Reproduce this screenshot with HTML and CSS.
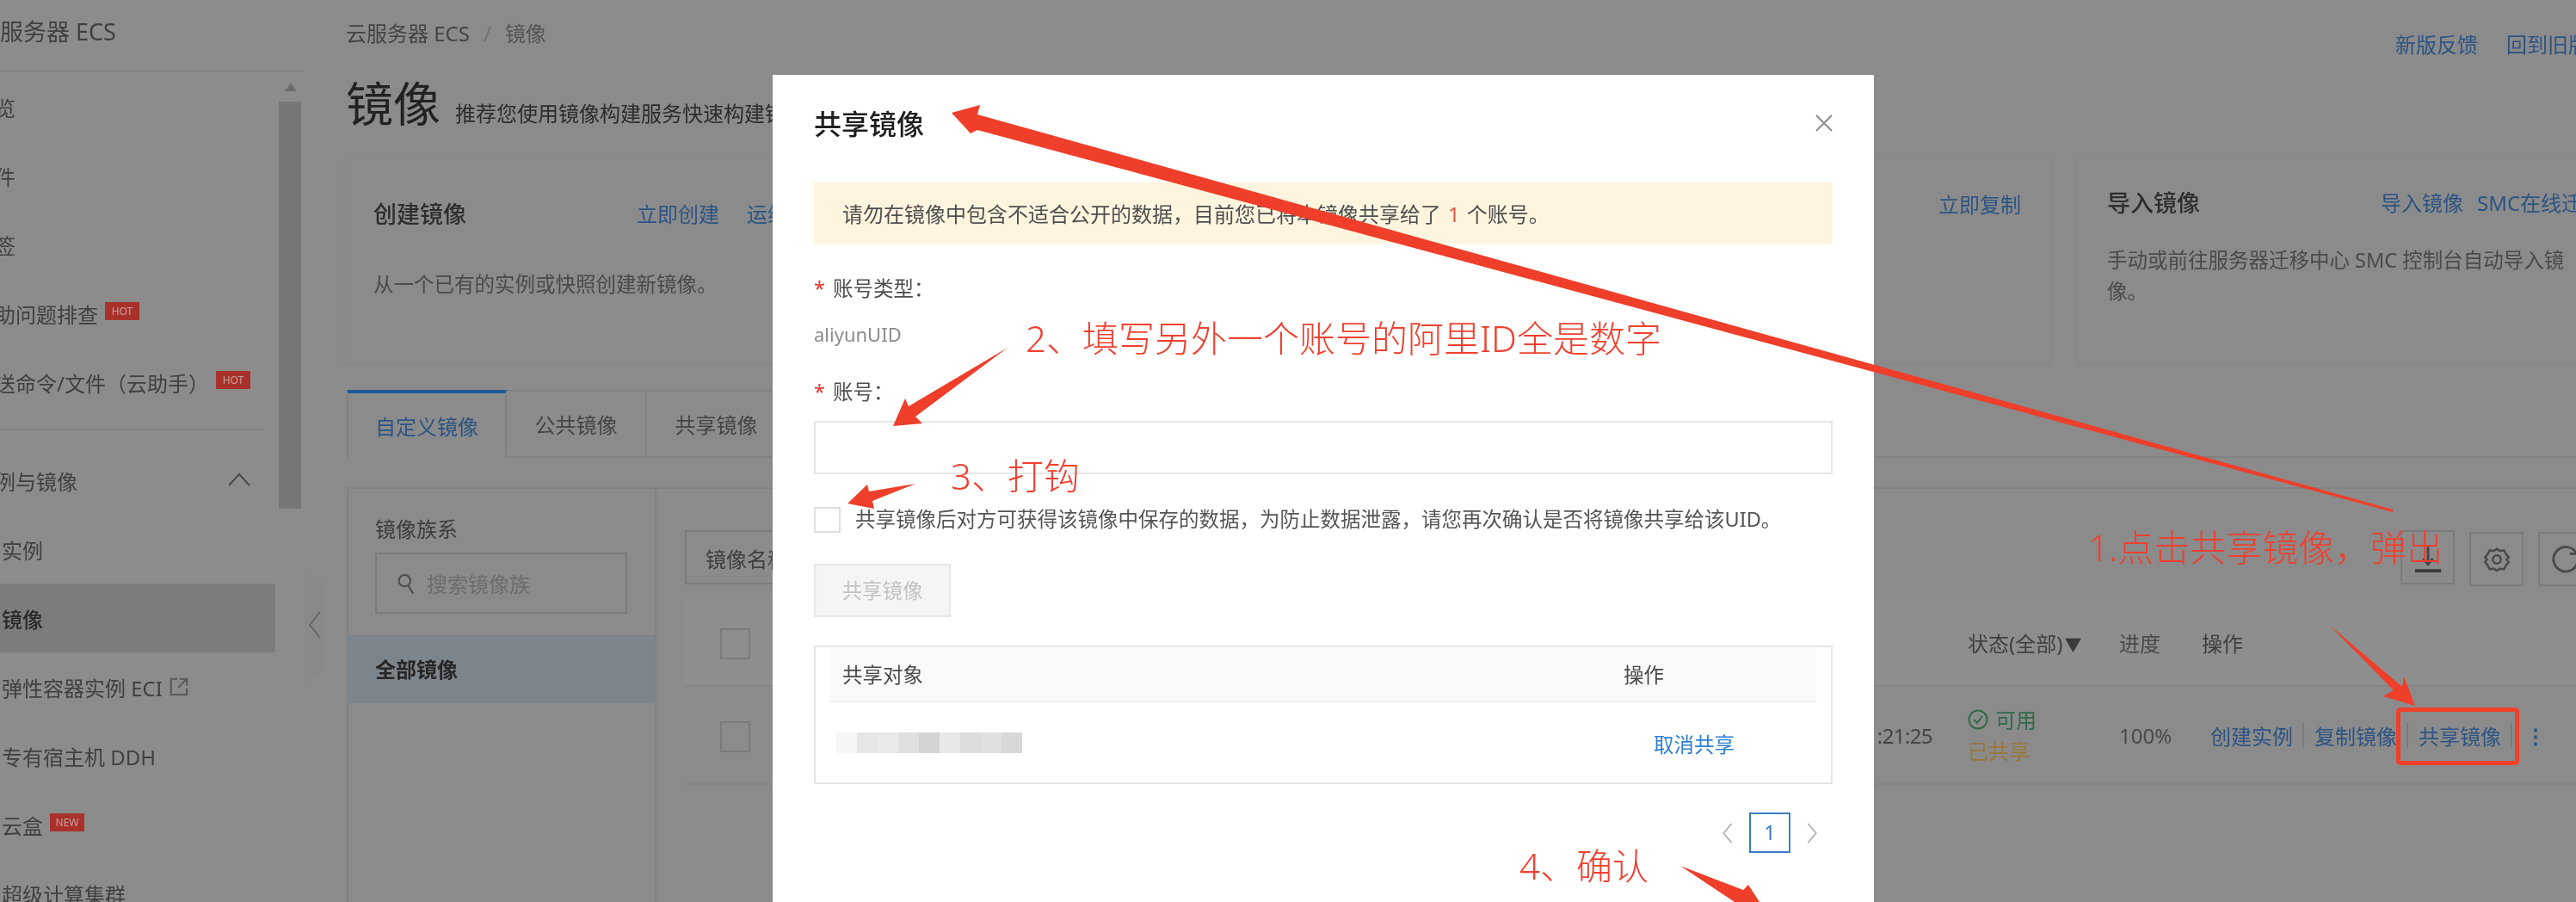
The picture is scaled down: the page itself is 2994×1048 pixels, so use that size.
FILE: index.html
```html
<!DOCTYPE html>
<html lang="zh-CN">
<head>
<meta charset="utf-8">
<title>镜像</title>
<link rel="stylesheet" href="styles.css">
</head>
<body>
<div class="page">
  <aside class="sidebar">
    <div class="side-head">云服务器 ECS</div>
    <div class="side-body">
      <nav class="side-nav">
        <div class="nav-item">概览</div>
        <div class="nav-item">事件</div>
        <div class="nav-item">标签</div>
        <div class="nav-item">自助问题排查<span class="badge">HOT</span></div>
        <div class="nav-item">发送命令/文件（云助手）<span class="badge">HOT</span></div>
        <div class="nav-divider"></div>
        <div class="nav-item nav-group">实例与镜像
          <svg class="nav-chevron" viewBox="0 0 26 16"><path d="M1 15 13 2l12 13" fill="none" stroke="#4a4a4a" stroke-width="2"/></svg>
        </div>
        <div class="nav-item nav-sub">实例</div>
        <div class="nav-item nav-sub nav-active">镜像</div>
        <div class="nav-item nav-sub">弹性容器实例 ECI
          <svg class="nav-ext" viewBox="0 0 24 24"><path d="M10 2H2v20h20v-8M13 2h9v9M22 2 11 13" fill="none" stroke="#5c5c5c" stroke-width="2.4"/></svg>
        </div>
        <div class="nav-item nav-sub">专有宿主机 DDH</div>
        <div class="nav-item nav-sub">云盒<span class="badge badge-new">NEW</span></div>
        <div class="nav-item nav-sub">超级计算集群</div>
      </nav>
      <div class="scrollbar">
        <div class="scroll-up"></div>
        <div class="scroll-thumb"></div>
      </div>
    </div>
  </aside>

  <main class="main">
    <div class="topbar">
      <div class="crumbs">云服务器 ECS<span class="crumb-sep">/</span><span class="crumb-now">镜像</span></div>
      <div class="top-links"><span>新版反馈</span><span>回到旧版</span></div>
    </div>
    <div class="title-row">
      <h1 class="page-title">镜像</h1>
      <span class="page-sub">推荐您使用镜像构建服务快速构建镜像</span>
    </div>

    <section class="cards">
      <div class="card card-create">
        <div class="card-head">
          <strong class="card-title">创建镜像</strong>
          <span class="card-links"><span>立即创建</span><span>运维编排</span></span>
        </div>
        <p class="card-desc">从一个已有的实例或快照创建新镜像。</p>
      </div>
      <div class="card card-copy">
        <div class="card-head card-head-copy">
          <strong class="card-title">复制镜像</strong>
          <span class="card-links"><span>立即复制</span></span>
        </div>
      </div>
      <div class="card card-import">
        <div class="card-head card-head-import">
          <strong class="card-title">导入镜像</strong>
          <span class="card-links"><span>导入镜像</span><span>SMC在线迁移</span></span>
        </div>
        <p class="card-desc card-desc-import">手动或前往服务器迁移中心 SMC 控制台自动导入镜像。</p>
      </div>
    </section>

    <div class="tabs">
      <div class="tab tab-on">自定义镜像</div>
      <div class="tab">公共镜像</div>
      <div class="tab">共享镜像</div>
    </div>

    <section class="panel">
      <div class="family">
        <div class="family-title">镜像族系</div>
        <div class="family-search">
          <svg class="search-ico" viewBox="0 0 24 32"><circle cx="10" cy="12" r="8" fill="none" stroke="#4c4c4c" stroke-width="2.4"/><path d="m15 19 7 11" stroke="#4c4c4c" stroke-width="2.6" fill="none"/></svg>
          <span>搜索镜像族</span>
        </div>
        <div class="family-item">全部镜像</div>
      </div>
      <div class="list">
        <div class="toolbar">
          <div class="name-select">镜像名称</div>
          <div class="tool-btns">
            <div class="tool-btn tool-first">
              <svg viewBox="0 0 40 40" class="tool-ico"><path d="M20 6v20M14 21l6 7 6-7" fill="none" stroke="#444" stroke-width="3"/><path d="M4 36h32" stroke="#3a3a3a" stroke-width="4"/></svg>
            </div>
            <div class="tool-btn">
              <svg viewBox="0 0 40 40" class="tool-ico"><path d="M20 4l5 3 6-1 3 6 4 5-3 3 3 4-4 5-3 6-6-1-5 3-5-3-6 1-3-6-4-5 3-4-3-3 4-5 3-6 6 1z" transform="translate(4 4) scale(.8)" fill="none" stroke="#4a4a4a" stroke-width="3.4"/><circle cx="20" cy="20" r="5" fill="none" stroke="#4a4a4a" stroke-width="2.6"/></svg>
            </div>
            <div class="tool-btn">
              <svg viewBox="0 0 40 40" class="tool-ico"><path d="M33 12A15 15 0 1 0 35 22" fill="none" stroke="#4a4a4a" stroke-width="3"/><path d="M34 4v9h-9" fill="none" stroke="#4a4a4a" stroke-width="3"/></svg>
            </div>
          </div>
        </div>
        <div class="t-row t-head">
          <span class="t-check"></span>
          <span class="t-fill"></span>
          <span class="t-status">状态(全部)<i class="caret">▼</i></span>
          <span class="t-progress">进度</span>
          <span class="t-ops">操作</span>
        </div>
        <div class="t-row t-body">
          <span class="t-check"></span>
          <span class="t-fill t-time">2021-03-01 11:21:25</span>
          <span class="t-status">
            <span class="st-ok">
              <svg class="st-ico" viewBox="0 0 24 24"><circle cx="12" cy="12" r="10.5" fill="none" stroke="#2e6b46" stroke-width="2"/><path d="m7 12 4 4 6-8" fill="none" stroke="#2e6b46" stroke-width="2"/></svg>可用</span>
            <span class="st-shared">已共享</span>
          </span>
          <span class="t-progress">100%</span>
          <span class="t-ops t-links">
            <span>创建实例</span><i></i><span>复制镜像</span><i></i><span>共享镜像</span><i></i><b class="more">⋮</b>
          </span>
        </div>
      </div>
    </section>
  </main>

  <div class="collapse-tab">
    <svg viewBox="0 0 16 32" class="collapse-ico"><path d="M14 1 2 16l12 15" fill="none" stroke="#666" stroke-width="2"/></svg>
  </div>

  <section class="modal">
    <div class="modal-head">
      <h2>共享镜像</h2>
      <svg class="modal-x" viewBox="0 0 20 20"><path d="M1 1l18 18M19 1 1 19" stroke="#8a8a8a" stroke-width="2" fill="none"/></svg>
    </div>
    <div class="notice">请勿在镜像中包含不适合公开的数据，目前您已将本镜像共享给了<em>1</em>个账号。</div>
    <div class="field-label label-type"><span class="req">*</span>账号类型：</div>
    <div class="field-value">aliyunUID</div>
    <div class="field-label label-acct"><span class="req">*</span>账号：</div>
    <div class="acct-input"></div>
    <div class="confirm">
      <span class="box"></span>
      <span>共享镜像后对方可获得该镜像中保存的数据，为防止数据泄露，请您再次确认是否将镜像共享给该UID。</span>
    </div>
    <div class="share-btn">共享镜像</div>
    <div class="share-table">
      <div class="share-head"><span>共享对象</span><span class="col-op">操作</span></div>
      <div class="share-row">
        <div class="mosaic"><i></i><i></i><i></i><i></i><i></i><i></i><i></i><i></i><i></i></div>
        <span class="col-op cancel">取消共享</span>
      </div>
    </div>
    <div class="pager">
      <svg class="pg-arrow" viewBox="0 0 14 28"><path d="M12 2 2 14l10 12" fill="none" stroke="#b5b5b5" stroke-width="2"/></svg>
      <span class="pg-num">1</span>
      <svg class="pg-arrow" viewBox="0 0 14 28"><path d="m2 2 10 12L2 26" fill="none" stroke="#b5b5b5" stroke-width="2"/></svg>
    </div>
  </section>

  <svg class="arrows" viewBox="0 0 2994 1048">
    <polygon points="1106,131 1139,122 1136,133 2781,592 2781,595 1136,151 1128,155"/>
    <polygon points="1038,495 1052,463 1056,472 1171,404 1064,484 1072,492"/>
    <polygon points="985,585 1008,563 1010,571 1064,562 1014,582 1016,591"/>
    <polygon points="2807,820 2770,809 2782,802 2706,725 2792,798 2794,786"/>
    <polygon points="1953,1006 2026,1034 2032,1028 2045,1048 2016,1048"/>
  </svg>
  <div class="redbox"></div>
  <div class="note note-1">1.点击共享镜像，弹出</div>
  <div class="note note-2">2、填写另外一个账号的阿里ID全是数字</div>
  <div class="note note-3">3、打钩</div>
  <div class="note note-4">4、确认</div>
  <div class="watermark">https://blog.csdn.net/weixin_41057 1078</div>
</div>
</body>
</html>
```
FILE: styles.css
```css
* { box-sizing: border-box; }
html, body { margin: 0; padding: 0; }
body {
  width: 2994px;
  height: 1048px;
  overflow: hidden;
  background: #8b8b8b;
  font-family: "Noto Sans", "Noto Sans CJK SC", sans-serif;
  font-size: 24px;
  color: #3e3e3e;
}
.page {
  position: relative;
  display: flex;
  width: 2994px;
  height: 1048px;
  overflow: hidden;
  background: #8b8b8b;
  filter: blur(0.7px);
}

/* sidebar */
.sidebar { width: 354px; flex: none; background: #8c8c8c; display: flex; flex-direction: column; overflow: hidden; }
.side-head {
  width: 381px;
  height: 84px;
  flex: none;
  margin-left: -27px;
  padding-bottom: 12px;
  display: flex;
  align-items: center;
  font-size: 27px;
  color: #404040;
  border-bottom: 2px solid #838383;
  white-space: nowrap;
}
.side-body { flex: 1; display: flex; min-height: 0; }
.side-nav { width: 320px; flex: none; overflow: hidden; }
.nav-item {
  height: 80px;
  margin-left: -30px;
  display: flex;
  align-items: center;
  white-space: nowrap;
  color: #404040;
}
.nav-divider { height: 2px; background: #828282; margin: 14px 14px 18px 0; }
.nav-group { position: relative; }
.nav-chevron { position: absolute; left: 295px; top: 31px; width: 26px; height: 16px; }
.nav-sub { margin-left: 2px; }
.nav-active { margin-left: 0; padding-left: 2px; background: #7c7c7c; color: #2a2a2a; font-weight: 500; }
.nav-ext { width: 22px; height: 24px; margin-left: 8px; }
.badge {
  display: inline-block;
  margin-left: 8px;
  margin-top: -6px;
  width: 40px;
  height: 21px;
  line-height: 21px;
  background: #a8322b;
  color: #c9a09c;
  font-size: 12px;
  text-align: center;
}
.scrollbar { width: 26px; margin-left: 4px; flex: none; position: relative; }
.scroll-up {
  position: absolute;
  left: 7px;
  top: 12px;
  border-left: 7px solid transparent;
  border-right: 7px solid transparent;
  border-bottom: 10px solid #6c6c6c;
}
.scroll-thumb { position: absolute; top: 34px; left: 0; width: 26px; height: 473px; background: #767676; }

.collapse-tab {
  position: absolute;
  left: 354px;
  top: 662px;
  width: 24px;
  height: 132px;
  background: #898989;
  clip-path: polygon(0 0, 100% 14px, 100% 116px, 0 100%);
  display: flex;
  align-items: center;
  padding-left: 4px;
}
.collapse-ico { width: 16px; height: 32px; margin-top: -4px; }

/* main */
.main { flex: 1; min-width: 0; padding-left: 48px; overflow: hidden; }
.topbar { display: flex; justify-content: space-between; height: 75px; }
.crumbs { margin-top: 22px; line-height: 34px; color: #444; white-space: nowrap; }
.crumb-sep { margin: 0 16px; color: #707070; }
.crumb-now { color: #555; }
.top-links { margin-top: 35px; line-height: 34px; color: #2c5484; display: flex; gap: 33px; white-space: nowrap; margin-right: -15px; }
.title-row { height: 108px; display: flex; align-items: baseline; gap: 17px; padding-top: 10px; white-space: nowrap; }
.page-title { margin: 0; font-size: 55px; font-weight: 400; line-height: 70px; color: #222; }
.page-sub { color: #2c2c2c; }

.cards { display: flex; gap: 30px; height: 239px; }
.card { flex: none; border: 1px solid #878787; height: 239px; box-shadow: 0 2px 3px #868686; }
.card-create { width: 720px; padding: 0 31px; }
.card-copy { width: 1232px; padding: 0 34px 0 30px; }
.card-import { width: 640px; padding: 0 34px; }
.card-head { display: flex; align-items: center; margin-top: 46px; height: 34px; white-space: nowrap; }
.card-head-copy { margin-top: 35px; justify-content: space-between; }
.card-head-import { margin-top: 33px; gap: 210px; }
.card-title { font-size: 27px; font-weight: 500; color: #2e2e2e; }
.card-links { display: flex; gap: 32px; color: #2c5484; }
.card-create .card-title { margin-right: 198px; }
.card-import .card-links { gap: 16px; }
.card-desc { margin: 48px 0 0; font-size: 23.5px; line-height: 36px; color: #4a4a4a; }
.card-desc-import { margin-top: 33px; width: 562px; }

.tabs { display: flex; margin-top: 31px; height: 79px; }
.tab {
  width: 163px;
  height: 79px;
  border-top: 2px solid #828282;
  border-right: 2px solid #828282;
  border-bottom: 2px solid #828282;
  display: flex;
  align-items: center;
  justify-content: center;
  color: #454545;
}
.tab-on {
  width: 186px;
  margin-left: 1px;
  border-top: 4px solid #1c5a96;
  border-left: 2px solid #828282;
  border-bottom: 0;
  color: #2c5484;
}
.tabs::after { content: ""; flex: 1; border-bottom: 2px solid #828282; }

.panel {
  margin-top: 34px;
  margin-left: 1px;
  height: 600px;
  display: grid;
  grid-template-columns: 358px 1fr;
  border-top: 2px solid #828282;
  border-left: 2px solid #828282;
}
.family { border-right: 2px solid #828282; }
.family-title { margin: 30px 0 0 31px; line-height: 34px; color: #3c3c3c; }
.family-search {
  margin: 10px 32px 0 31px;
  height: 71px;
  border: 2px solid #7b7b7b;
  display: flex;
  align-items: center;
  gap: 14px;
  padding-left: 24px;
  color: #6c6c6c;
}
.search-ico { width: 20px; height: 30px; }
.family-item {
  margin-top: 25px;
  height: 79px;
  line-height: 79px;
  padding-left: 31px;
  background: #7c848c;
  font-weight: 700;
  color: #262626;
}
.list { padding: 48px 0 0 33px; min-width: 0; }
.toolbar { display: flex; justify-content: space-between; align-items: flex-start; height: 63px; margin-right: -19px; }
.name-select { width: 400px; height: 63px; line-height: 63px; padding-left: 22px; border: 2px solid #7b7b7b; color: #3e3e3e; }
.tool-btns { display: flex; gap: 17px; }
.tool-btn { width: 63px; height: 63px; border: 2px solid #7b7b7b; display: flex; align-items: center; justify-content: center; margin-top: 2px; }
.tool-first { margin-top: 0; }
.tool-ico { width: 38px; height: 38px; }
.t-row { display: grid; grid-template-columns: 41px 1450px 176px 96px 1fr; align-items: center; }
.t-head { margin-top: 17px; height: 102px; background: #8e8e8e; border-bottom: 2px solid #858585; }
.t-body { height: 114px; border-bottom: 2px solid #858585; }
.t-check { grid-column: 1; position: relative; height: 32px; }
.t-check::after { content: ""; position: absolute; left: 41px; top: 0; width: 31px; height: 32px; border: 2px solid #7b7b7b; }
.t-fill { text-align: right; padding-right: 41px; color: #444; }
.t-time { letter-spacing: -0.6px; }
.t-status { display: flex; flex-direction: column; color: #404040; }
.t-head .t-status { display: block; }
.caret { font-style: normal; font-size: 20px; color: #3a3a3a; margin-left: 2px; }
.st-ok { color: #2f6a47; display: flex; align-items: center; gap: 8px; line-height: 37px; }
.st-ico { width: 24px; height: 26px; }
.st-shared { color: #99773a; line-height: 36px; }
.t-progress { color: #4a4a4a; }
.t-links { display: flex; align-items: center; padding-left: 10px; color: #2c5484; white-space: nowrap; }
.t-links i { width: 2px; height: 28px; margin: 0 12px 0 11px; background: #7a7a7a; }
.more { font-weight: 700; margin-left: 3px; color: #2c5484; }

/* modal */
.modal {
  position: absolute;
  left: 898px;
  top: 87px;
  width: 1280px;
  height: 961px;
  background: #fff;
  padding: 35px 48px 0;
  color: #555;
  font-size: 23.5px;
}
.modal-head { display: flex; justify-content: space-between; align-items: center; height: 40px; }
.modal-head h2 { margin: 0; font-size: 32px; font-weight: 500; color: #1f1f1f; }
.modal-x { width: 20px; height: 20px; margin-top: 2px; }
.notice {
  margin-top: 50px;
  height: 71px;
  line-height: 73px;
  padding-left: 33px;
  background: #fff5df;
  color: #4e4e4e;
  font-size: 24px;
}
.notice em { font-style: normal; color: #e2574c; margin: 0 8px; }
.field-label { height: 32px; line-height: 32px; color: #4e4e4e; }
.label-type { margin-top: 36px; }
.label-acct { margin-top: 35px; }
.req { color: #e0362c; margin-right: 9px; }
.field-value { margin-top: 21px; height: 32px; line-height: 32px; color: #8a8a8a; font-size: 22px; }
.acct-input { margin-top: 18px; height: 62px; border: 2px solid #e6e6e6; }
.confirm { margin-top: 38px; display: flex; align-items: flex-start; gap: 17px; height: 30px; line-height: 28px; white-space: nowrap; }
.box { width: 31px; height: 30px; flex: none; border: 2px solid #dedede; }
.share-btn {
  margin-top: 36px;
  width: 159px;
  height: 62px;
  line-height: 58px;
  text-align: center;
  background: #f5f5f5;
  border: 2px solid #e8e8e8;
  color: #c2c2c2;
}
.share-table { margin-top: 33px; height: 161px; border: 2px solid #e6e6e6; padding: 0 17px; }
.share-head {
  height: 64px;
  display: flex;
  align-items: center;
  padding-left: 14px;
  background: #f9f9f9;
  border-bottom: 2px solid #eee;
  color: #4a4a4a;
}
.share-head .col-op { margin-left: 814px; }
.share-row { height: 95px; display: flex; align-items: center; margin-left: 7px; }
.mosaic { display: flex; width: 216px; height: 24px; margin-top: -2px; }
.mosaic i { flex: 1; background: #ececec; }
.mosaic i:nth-child(1) { background: #f6f6f6; }
.mosaic i:nth-child(2) { background: #e6e6e6; }
.mosaic i:nth-child(3) { background: #e9e9e9; }
.mosaic i:nth-child(4) { background: #dfdfdf; }
.mosaic i:nth-child(5) { background: #d4d4d4; }
.mosaic i:nth-child(6) { background: #e8e8e8; }
.mosaic i:nth-child(7) { background: #dcdcdc; }
.mosaic i:nth-child(8) { background: #e0e0e0; }
.mosaic i:nth-child(9) { background: #d8d8d8; }
.cancel { margin-left: 734px; color: #2f7fd0; }
.pager { margin-top: 33px; display: flex; align-items: center; justify-content: flex-end; gap: 18px; padding-right: 17px; }
.pg-arrow { width: 14px; height: 26px; }
.pg-num {
  width: 48px;
  height: 47px;
  line-height: 43px;
  text-align: center;
  border: 2px solid #3a7cc8;
  color: #3a7cc8;
}

/* annotations */
.arrows { position: absolute; inset: 0; width: 2994px; height: 1048px; fill: #ef3e2a; pointer-events: none; }
.redbox {
  position: absolute;
  left: 2785px;
  top: 822px;
  width: 143px;
  height: 67px;
  border: 5px solid #ef4129;
  border-radius: 5px;
}
.note {
  position: absolute;
  font-size: 42px;
  line-height: 50px;
  font-weight: 300;
  color: #f0402f;
  white-space: nowrap;
}
.note-1 { left: 2427px; top: 611px; }
.note-2 { left: 1192px; top: 368px; }
.note-3 { left: 1105px; top: 528px; }
.note-4 { left: 1766px; top: 981px; }
.watermark {
  position: absolute;
  left: 2437px;
  top: 1040px;
  font-size: 28px;
  line-height: 36px;
  letter-spacing: 2px;
  color: #e8e8e8;
  white-space: nowrap;
}
```
